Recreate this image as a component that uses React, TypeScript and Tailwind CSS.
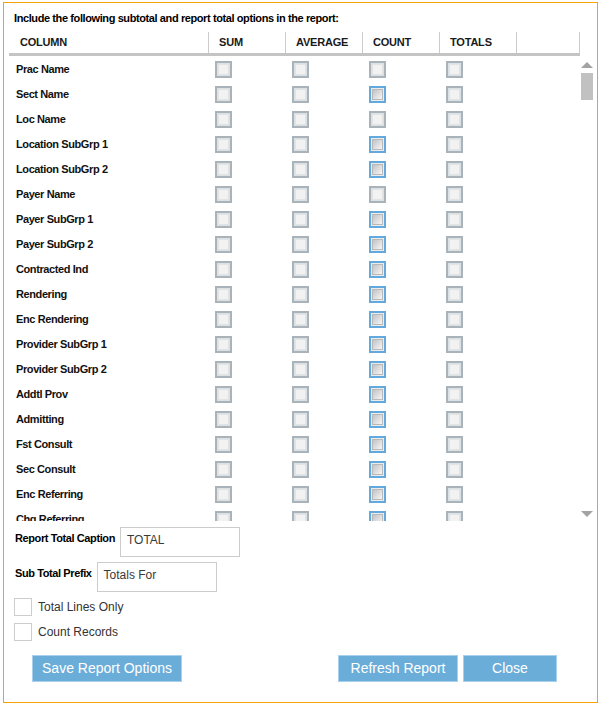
import React from "react";

type Row = { name: string; count: boolean };

const rows: Row[] = [
  { name: "Prac Name", count: false },
  { name: "Sect Name", count: true },
  { name: "Loc Name", count: false },
  { name: "Location SubGrp 1", count: true },
  { name: "Location SubGrp 2", count: true },
  { name: "Payer Name", count: false },
  { name: "Payer SubGrp 1", count: true },
  { name: "Payer SubGrp 2", count: true },
  { name: "Contracted Ind", count: true },
  { name: "Rendering", count: true },
  { name: "Enc Rendering", count: true },
  { name: "Provider SubGrp 1", count: true },
  { name: "Provider SubGrp 2", count: true },
  { name: "Addtl Prov", count: true },
  { name: "Admitting", count: true },
  { name: "Fst Consult", count: true },
  { name: "Sec Consult", count: true },
  { name: "Enc Referring", count: true },
  { name: "Chg Referring", count: true },
];

const font = { fontFamily: '"Liberation Sans", Arial, sans-serif' };

function GridBox({ marked }: { marked?: boolean }) {
  if (marked) {
    return (
      <div className="w-[17px] h-[17px] border-2 border-[#63a9de] bg-[#ececec] p-px">
        <div className="w-full h-full border border-[#b9b9b9] bg-gradient-to-br from-[#c3c3c7] to-[#f6f6f6]" />
      </div>
    );
  }
  return (
    <div className="w-[17px] h-[17px] border-2 border-[#a9b3b9] bg-[#d9e2e7] p-px">
      <div className="w-full h-full border border-[#e3e3e3] bg-[#f2f2f2]" />
    </div>
  );
}

function HeadCell({ w, label, pl }: { w: string; label?: string; pl: string }) {
  return (
    <div className={`${w} ${pl} h-full flex items-center border-r border-[#cbcbcb]`}>
      {label && <span className="text-[11px] font-bold tracking-[-0.2px] text-[#1a1a1a]">{label}</span>}
    </div>
  );
}

function FormCheck({ label, className }: { label: string; className?: string }) {
  return (
    <div className={`flex items-center gap-[6px] pl-[10px] ${className ?? ""}`}>
      <div className="w-[18px] h-[18px] border border-[#cdcdcd] bg-white" />
      <span className="text-[12px] text-[#333]">{label}</span>
    </div>
  );
}

export default function App() {
  return (
    <div className="w-[601px] h-[705px] bg-white pl-[3px] pt-[2px] overflow-hidden" style={font}>
      <div className="w-[595px] h-[701px] border border-[#f5a300] flex flex-col">
        {/* heading */}
        <div className="pt-[8px] pl-[10px] text-[11px] leading-[14px] font-bold tracking-[-0.4px] text-black">
          Include the following subtotal and report total options in the report:
        </div>

        {/* table */}
        <div className="mt-[7px] pl-[5px]">
          <div className="w-[571px]">
            <div className="flex h-[21px]">
              <HeadCell w="w-[200px]" pl="pl-[11px]" label="COLUMN" />
              <HeadCell w="w-[77px]" pl="pl-[10px]" label="SUM" />
              <HeadCell w="w-[77px]" pl="pl-[10px]" label="AVERAGE" />
              <HeadCell w="w-[77px]" pl="pl-[10px]" label="COUNT" />
              <HeadCell w="w-[77px]" pl="pl-[10px]" label="TOTALS" />
              <HeadCell w="w-[63px]" pl="pl-0" />
            </div>
            <div className="h-[3px] bg-[#c4c4c4]" />
          </div>

          <div className="flex">
            <div className="w-[571px] h-[465px] overflow-hidden">
              {rows.map((r) => (
                <div key={r.name} className="flex items-center h-[25px] pt-px">
                  <div className="w-[200px] pl-[7px] text-[11px] font-bold tracking-[-0.4px] text-[#111]">
                    {r.name}
                  </div>
                  <div className="w-[77px] pl-[6px]">
                    <GridBox />
                  </div>
                  <div className="w-[77px] pl-[6px]">
                    <GridBox />
                  </div>
                  <div className="w-[77px] pl-[6px]">
                    <GridBox marked={r.count} />
                  </div>
                  <div className="w-[77px] pl-[6px]">
                    <GridBox />
                  </div>
                </div>
              ))}
            </div>

            {/* scrollbar */}
            <div className="ml-[1px] w-[12px] h-[465px] flex flex-col pt-[6px] pb-[4px]">
              <div className="w-0 h-0 border-l-[6px] border-r-[6px] border-b-[6px] border-l-transparent border-r-transparent border-b-[#a3a3a3]" />
              <div className="mt-[5px] h-[27px] bg-[#c1c1c1]" />
              <div className="flex-1" />
              <div className="w-0 h-0 border-l-[6px] border-r-[6px] border-t-[6px] border-l-transparent border-r-transparent border-t-[#a3a3a3]" />
            </div>
          </div>
        </div>

        {/* options */}
        <div className="mt-[6px] pl-[11px] flex items-start">
          <span className="pt-[4px] text-[11px] leading-[14px] font-bold tracking-[-0.4px] text-black">
            Report Total Caption
          </span>
          <div className="ml-[5px] w-[120px] h-[30px] border border-[#cccccc] pl-[6px] pt-[4px] text-[12px] leading-[16px] text-[#3a3a3a]">
            TOTAL
          </div>
        </div>
        <div className="mt-[5px] pl-[11px] flex items-start">
          <span className="pt-[4px] text-[11px] leading-[14px] font-bold tracking-[-0.4px] text-black">
            Sub Total Prefix
          </span>
          <div className="ml-[5px] w-[120px] h-[30px] border border-[#cccccc] pl-[6px] pt-[4px] text-[12px] leading-[16px] text-[#3a3a3a]">
            Totals For
          </div>
        </div>

        <FormCheck label="Total Lines Only" className="mt-[6px]" />
        <FormCheck label="Count Records" className="mt-[7px]" />

        {/* buttons */}
        <div className="mt-[14px] pl-[28px] flex">
          <button className="w-[150px] h-[27px] bg-[#6badd9] border border-[#a9d1ee] text-white text-[14px]">
            Save Report Options
          </button>
          <button className="ml-[156px] w-[120px] h-[27px] bg-[#6badd9] border border-[#a9d1ee] text-white text-[14px]">
            Refresh Report
          </button>
          <button className="ml-[5px] w-[94px] h-[27px] bg-[#6badd9] border border-[#a9d1ee] text-white text-[14px]">
            Close
          </button>
        </div>
      </div>
    </div>
  );
}
